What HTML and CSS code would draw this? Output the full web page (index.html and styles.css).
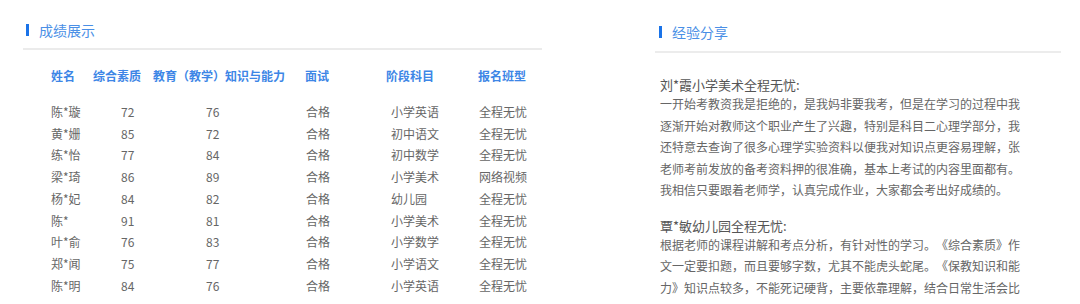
FILE: index.html
```html
<!DOCTYPE html>
<html lang="zh-CN">
<head>
<meta charset="utf-8">
<title>成绩展示</title>
<link rel="stylesheet" href="styles.css">
</head>
<body>
<div class="page">
  <section class="panel panel-left">
    <div class="head"><span class="bar"></span><span class="title">成绩展示</span></div>
    <div class="rule"></div>
    <div class="table">
      <div class="row row-head">
        <span>姓名</span><span>综合素质</span><span>教育（教学）知识与能力</span><span>面试</span><span>阶段科目</span><span>报名班型</span>
      </div>
      <div class="body">
        <div class="row"><span>陈*璇</span><span class="c2">72</span><span class="c3">76</span><span class="c4">合格</span><span class="c5">小学英语</span><span class="c6">全程无忧</span></div>
        <div class="row"><span>黄*姗</span><span class="c2">85</span><span class="c3">72</span><span class="c4">合格</span><span class="c5">初中语文</span><span class="c6">全程无忧</span></div>
        <div class="row"><span>练*怡</span><span class="c2">77</span><span class="c3">84</span><span class="c4">合格</span><span class="c5">初中数学</span><span class="c6">全程无忧</span></div>
        <div class="row"><span>梁*琦</span><span class="c2">86</span><span class="c3">89</span><span class="c4">合格</span><span class="c5">小学美术</span><span class="c6">网络视频</span></div>
        <div class="row"><span>杨*妃</span><span class="c2">84</span><span class="c3">82</span><span class="c4">合格</span><span class="c5">幼儿园</span><span class="c6">全程无忧</span></div>
        <div class="row"><span>陈*</span><span class="c2">91</span><span class="c3">81</span><span class="c4">合格</span><span class="c5">小学美术</span><span class="c6">全程无忧</span></div>
        <div class="row"><span>叶*俞</span><span class="c2">76</span><span class="c3">83</span><span class="c4">合格</span><span class="c5">小学数学</span><span class="c6">全程无忧</span></div>
        <div class="row"><span>郑*闻</span><span class="c2">75</span><span class="c3">77</span><span class="c4">合格</span><span class="c5">小学语文</span><span class="c6">全程无忧</span></div>
        <div class="row"><span>陈*明</span><span class="c2">84</span><span class="c3">76</span><span class="c4">合格</span><span class="c5">小学英语</span><span class="c6">全程无忧</span></div>
      </div>
    </div>
  </section>
  <section class="panel panel-right">
    <div class="head"><span class="bar"></span><span class="title">经验分享</span></div>
    <div class="rule rule-thin"></div>
    <div class="stories">
      <div class="story">
        <div class="story-title">刘*霞小学美术全程无忧:</div>
        <p class="story-text">一开始考教资我是拒绝的，是我妈非要我考，但是在学习的过程中我逐渐开始对教师这个职业产生了兴趣，特别是科目二心理学部分，我还特意去查询了很多心理学实验资料以便我对知识点更容易理解，张老师考前发放的备考资料押的很准确，基本上考试的内容里面都有。我相信只要跟着老师学，认真完成作业，大家都会考出好成绩的。</p>
      </div>
      <div class="story">
        <div class="story-title">覃*敏幼儿园全程无忧:</div>
        <p class="story-text">根据老师的课程讲解和考点分析，有针对性的学习。《综合素质》作文一定要扣题，而且要够字数，尤其不能虎头蛇尾。《保教知识和能力》知识点较多，不能死记硬背，主要依靠理解，结合日常生活会比</p>
      </div>
    </div>
  </section>
</div>
</body>
</html>
```

FILE: styles.css
```css
html, body {
  margin: 0;
  padding: 0;
  background: #ffffff;
  overflow: hidden;
}

body {
  width: 1080px;
  height: 304px;
  font-family: "Noto Sans CJK SC", "Noto Sans", "Liberation Sans", sans-serif;
  color: #666666;
  font-size: 12px;
  text-spacing-trim: space-all;
}

.page {
  display: flex;
  align-items: flex-start;
}

.panel-left {
  margin-left: 23px;
  width: 519px;
}

.panel-right {
  margin-left: 113px;
  width: 406px;
}

.head {
  display: flex;
  align-items: center;
  height: 14px;
  margin-top: 23px;
  padding-left: 3px;
}

.panel-right .head {
  margin-top: 25px;
  padding-left: 4px;
}

.bar {
  width: 3px;
  height: 12px;
  background: #1a73e8;
  margin-right: 10px;
}

.title {
  font-size: 14px;
  line-height: 14px;
  color: #4a8fe6;
}

.rule {
  margin-top: 11px;
  border-top: 2px solid #ebebeb;
}

.rule-thin {
  margin-top: 12px;
  border-top: 2px solid #ececec;
}

/* table */
.table {
  padding-left: 28px;
  margin-top: 15px;
}

.row {
  display: grid;
  grid-template-columns: 42px 60px 152px 81px 92px auto;
  height: 21.75px;
  line-height: 21.75px;
  white-space: nowrap;
}

.row-head {
  font-weight: bold;
  color: #3d86e6;
}

.body {
  margin-top: 14px;
}

.c2 { padding-left: 28px; }
.c3 { padding-left: 53px; }
.c4 { padding-left: 1px; }
.c5 { padding-left: 5px; }
.c6 { padding-left: 1px; }

/* stories */
.stories {
  padding-left: 5px;
  width: 366px;
}

.story {
  margin-top: 17px;
}

.story:first-child {
  margin-top: 24px;
}

.story-title {
  font-size: 13px;
  line-height: 16px;
  color: #555555;
}

.story-text {
  margin: 0;
  line-height: 21.5px;
  color: #666666;
}
```
